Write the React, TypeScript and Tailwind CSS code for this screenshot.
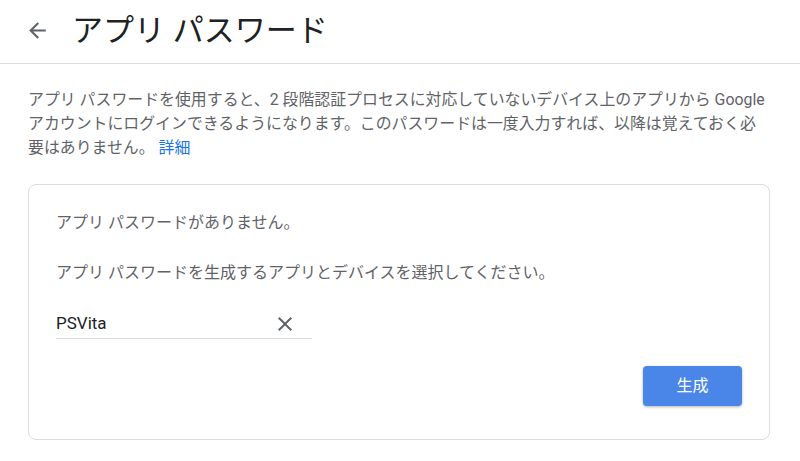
import React from "react";

const FONT = "font-['Roboto','Noto_Sans_CJK_JP',sans-serif]";

const BackArrow = () => (
  <svg width="25" height="25" viewBox="0 0 24 24" fill="#5f6368">
    <path d="M20 11H7.83l5.59-5.59L12 4l-8 8 8 8 1.41-1.41L7.83 13H20v-2z" />
  </svg>
);

const ClearIcon = () => (
  <svg width="24" height="24" viewBox="0 0 24 24" fill="#5f6368">
    <path d="M19 6.41 17.59 5 12 10.59 6.41 5 5 6.41 10.59 12 5 17.59 6.41 19 12 13.41 17.59 19 19 17.59 13.41 12z" />
  </svg>
);

const App = () => {
  return (
    <div className={`w-[800px] h-[461px] bg-white overflow-hidden ${FONT}`}>
      <div className="flex items-center h-[64px] pl-[25px] pb-[3px] border-b border-[#dadce0]">
        <BackArrow />
        <h1 className="ml-[22px] text-[31px] leading-none text-[#202124] font-normal">
          アプリ パスワード
        </h1>
      </div>
      <div className="px-[28px] pt-[24px]">
        <p className="text-[15.9px] leading-[24px] text-[#5f6368]">
          アプリ パスワードを使用すると、2 段階認証プロセスに対応していないデバイス上のアプリから Google
          <br />
          アカウントにログインできるようになります。このパスワードは一度入力すれば、以降は覚えておく必
          <br />
          要はありません。 <span className="text-[#1a73e8]">詳細</span>
        </p>
        <div className="mt-[24px] h-[256px] w-[742px] rounded-[8px] border border-[#dadce0] px-[27px] pt-[26px]">
          <p className="text-[16px] leading-[24px] text-[#5f6368]">アプリ パスワードがありません。</p>
          <p className="mt-[26px] text-[16px] leading-[24px] text-[#5f6368]">
            アプリ パスワードを生成するアプリとデバイスを選択してください。
          </p>
          <div className="mt-[25px] flex items-center justify-between w-[256px] h-[29px] border-b border-[#dadce0]">
            <span className="text-[17px] text-[#202124]">PSVita</span>
            <span className="mr-[15px]">
              <ClearIcon />
            </span>
          </div>
          <div className="flex justify-end mt-[27px]">
            <button className="w-[99px] h-[40px] rounded-[4px] bg-[#4a86e8] text-white text-[16px] shadow-[0_1px_3px_rgba(0,0,0,0.3)]">
              生成
            </button>
          </div>
        </div>
      </div>
    </div>
  );
};

export default App;
